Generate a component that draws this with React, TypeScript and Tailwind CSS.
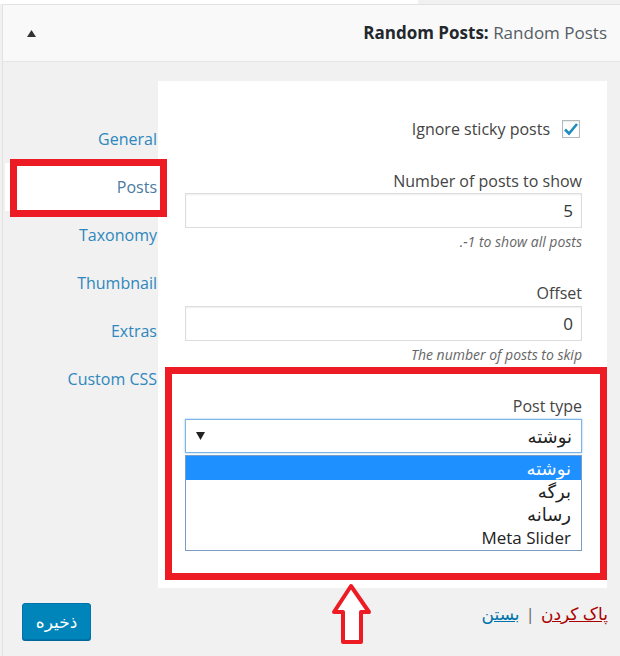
import React from 'react';

const tabs = ['General', 'Posts', 'Taxonomy', 'Thumbnail', 'Extras', 'Custom CSS'];
const options = ['نوشته', 'برگه', 'رسانه', 'Meta Slider'];

function TextInput({ value }: { value: string }) {
  return (
    <div className="flex h-[35px] items-center justify-end border border-[#dddddd] bg-white pr-[8px] text-[17px] text-[#32373c] shadow-[inset_0_1px_2px_rgba(0,0,0,0.07)]">
      {value}
    </div>
  );
}

export default function App() {
  return (
    <div className="relative h-[656px] w-[620px] overflow-hidden bg-[#f1f1f1] font-['Open_Sans','DejaVu_Sans',sans-serif] text-[16px] text-[#444]">
      <div className="flex h-[4px]">
        <div className="w-[418px] bg-white" />
        <div className="flex-1 bg-[#f1f1f1]" />
      </div>

      <div className="ml-[2px] h-[652px] border-l border-t border-[#e2e2e2] bg-[#f1f1f1]">
        {/* widget header */}
        <div className="flex h-[57px] items-center justify-between border-b border-[#e5e5e5] bg-[#f9f9f9] pl-[24px] pr-[13px]">
          <svg width="9" height="7" viewBox="0 0 9 7">
            <path d="M4.5 0 L9 7 L0 7 Z" fill="#333" />
          </svg>
          <h3 className="text-[17px] leading-[22px]">
            <span className="font-bold text-[#23282d]">Random Posts:</span>{' '}
            <span className="text-[#555d66]">Random Posts</span>
          </h3>
        </div>

        {/* body */}
        <div className="flex pt-[19px]">
          <ul className="w-[155px] pt-[34px] text-[16px]">
            {tabs.map(t => (
              <li
                key={t}
                className={
                  t === 'Posts'
                    ? 'ml-[2px] flex h-[48px] items-center justify-end bg-white pr-[1px] text-[#4a7ba3]'
                    : 'ml-[2px] flex h-[48px] items-center justify-end pr-[1px] text-[#2e87bd]'
                }
              >
                {t}
              </li>
            ))}
          </ul>

          <div className="w-[449px] bg-white pb-[37px] pl-[27px] pr-[25px] pt-[36px]">
            <div className="flex h-[24px] items-center justify-end gap-[12px]">
              <span>Ignore sticky posts</span>
              <span className="mr-[2px] flex h-[18px] w-[18px] items-center justify-center border border-[#b4b9be] bg-white shadow-[inset_0_1px_2px_rgba(0,0,0,0.1)]">
                <svg width="16" height="14" viewBox="0 0 16 14">
                  <path d="M2 7.5 L6 11.5 L14 2" fill="none" stroke="#1e8cbe" strokeWidth="2.6" />
                </svg>
              </span>
            </div>

            <div className="mt-[30px] h-[20px] text-right leading-[20px]">Number of posts to show</div>
            <div className="mt-[2px]">
              <TextInput value="5" />
            </div>
            <div className="mt-[5px] h-[18px] text-right text-[14px] italic leading-[18px] text-[#666]">.-1 to show all posts</div>

            <div className="mt-[32px] h-[20px] text-right leading-[20px]">Offset</div>
            <div className="mt-[3px]">
              <TextInput value="0" />
            </div>
            <div className="mt-[5px] h-[18px] text-right text-[14px] italic leading-[18px] text-[#666]">The number of posts to skip</div>

            <div className="mt-[32px] h-[20px] text-right leading-[20px]">Post type</div>
            <div className="mt-[3px] flex h-[34px] items-center justify-between border border-[#7eb4ea] bg-white pl-[10px] pr-[9px] shadow-[0_0_2px_rgba(30,140,190,0.5)]">
              <svg width="9" height="8" viewBox="0 0 9 8">
                <path d="M0 0 L9 0 L4.5 8 Z" fill="#222" />
              </svg>
              <span dir="rtl" className="text-[18px] text-[#222]">نوشته</span>
            </div>
            <ul className="mt-[2px] h-[96px] border border-[#7a9cc6] bg-white text-[17px] text-[#222]">
              {options.map((o, i) => (
                <li
                  key={o}
                  dir={i < 3 ? 'rtl' : 'ltr'}
                  className={
                    i === 0
                      ? 'flex h-[24px] items-center bg-[#1e90ff] pr-[10px] text-[18px] text-white'
                      : i < 3
                        ? 'flex h-[23px] items-center pr-[10px] text-[18px]'
                        : 'flex h-[23px] items-center justify-end pr-[10px]'
                  }
                >
                  {o}
                </li>
              ))}
            </ul>
          </div>
        </div>

        {/* footer */}
        <div className="flex items-start justify-between pl-[19px] pr-[12px] pt-[15px]">
          <button className="h-[37px] w-[69px] rounded-[3px] border border-[#0073aa] bg-[#0085ba] text-[17px] text-white shadow-[0_1px_0_#006799]">
            ذخیره
          </button>
          <div dir="rtl" className="flex h-[22px] items-center gap-[6px] text-[17px] leading-[22px]">
            <span className="text-[#a00] underline">پاک کردن</span>
            <span className="text-[#666]">|</span>
            <span className="text-[#0073aa] underline">بستن</span>
          </div>
        </div>
      </div>

      {/* red annotations */}
      <div className="absolute left-[10px] top-[159px] h-[58px] w-[157px] border-[7px] border-[#ed1c24]" />
      <div className="absolute left-[165px] top-[367px] h-[213px] w-[442px] border-[7px] border-[#ed1c24]" />
      <svg className="absolute left-[330px] top-[582px]" width="44" height="64" viewBox="0 0 44 64">
        <path d="M21 4 L39 30 L31 30 L31 60 L13 60 L13 30 L4 30 Z" fill="white" stroke="#ed1c24" strokeWidth="4" strokeLinejoin="round" />
      </svg>
    </div>
  );
}
